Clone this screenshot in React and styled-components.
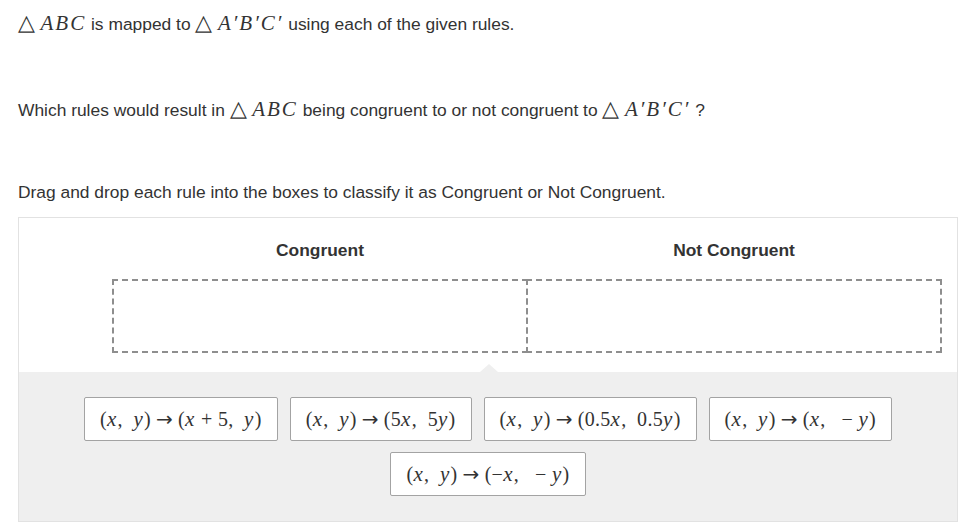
import styled, {createGlobalStyle} from 'styled-components';

const GlobalStyle = createGlobalStyle`
  html, body {
    margin: 0;
    padding: 0;
    background: #fff;
  }
  body {
    font-family: "Liberation Sans", Arial, sans-serif;
    color: #333;
  }
`;

const Page = styled.div`
  width: 972px;
  padding: 12px 14px 0 18px;
  box-sizing: border-box;
`;

const Prompt = styled.p`
  margin: 0;
  font-size: 17.4px;
  line-height: 24px;
  margin-bottom: ${p => p.$gap || 0}px;
`;

const M = styled.span`
  font-family: "Liberation Serif", "Times New Roman", serif;
  font-size: ${p => (p.$up ? 22 : 21)}px;
  line-height: 1;
  font-style: ${p => (p.$up ? 'normal' : 'italic')};
  letter-spacing: ${p => (p.$up ? 0 : 2)}px;
  white-space: pre;
`;

const Panel = styled.div`
  width: 940px;
  border: 1px solid #e2e2e2;
  box-sizing: border-box;
  background: #fff;
`;

const Zones = styled.div`
  display: grid;
  grid-template-columns: 416px 414px;
  padding: 16px 17px 19px 93px;
`;

const Column = styled.div`
  display: flex;
  flex-direction: column;
  align-items: stretch;
  margin-left: ${p => (p.$overlap ? '-2px' : '0')};
`;

const Heading = styled.div`
  font-weight: bold;
  font-size: 17.4px;
  text-align: center;
  height: 32px;
  line-height: 32px;
  margin-bottom: 13px;
`;

const Drop = styled.div`
  height: 74px;
  border: 2px dashed #8e8e8e;
  box-sizing: border-box;
`;

const Tray = styled.div`
  position: relative;
  background: #efefef;
  display: flex;
  flex-wrap: wrap;
  justify-content: center;
  gap: 11px 12px;
  padding: 25px 40px 25px;

  &::before {
    content: '';
    position: absolute;
    left: 461px;
    top: -8px;
    border-left: 9px solid transparent;
    border-right: 9px solid transparent;
    border-bottom: 8px solid #efefef;
  }
`;

const Tile = styled.div`
  height: 44px;
  box-sizing: border-box;
  padding: 0 15px;
  display: flex;
  align-items: center;
  background: #fff;
  border: 1px solid #a3a3a3;
  border-radius: 2px;
  font-family: "Liberation Serif", "Times New Roman", serif;
  font-size: 20px;
  letter-spacing: 0.3px;
  white-space: pre;
`;

const Var = styled.i`
  font-style: italic;
  font-size: 21px;
  padding-right: 1px;
`;

const Arrow = styled.span`
  font-family: "DejaVu Sans", sans-serif;
  font-size: 20px;
  margin: 0 5px;
`;

const rules = [
  ['(', 'x', ',  ', 'y', ')', '→', '(', 'x', ' + 5,  ', 'y', ')'],
  ['(', 'x', ',  ', 'y', ')', '→', '(5', 'x', ',  5', 'y', ')'],
  ['(', 'x', ',  ', 'y', ')', '→', '(0.5', 'x', ',  0.5', 'y', ')'],
  ['(', 'x', ',  ', 'y', ')', '→', '(', 'x', ',   − ', 'y', ')'],
  ['(', 'x', ',  ', 'y', ')', '→', '(−', 'x', ',   − ', 'y', ')'],
];

const Rule = ({parts}) => (
  <Tile>
    {parts.map((t, i) => {
      if (t === 'x' || t === 'y') return <Var key={i}>{t}</Var>;
      if (t === '→') return <Arrow key={i}>{t}</Arrow>;
      return <span key={i}>{t}</span>;
    })}
  </Tile>
);

export default function App() {
  return (
    <Page>
      <GlobalStyle />
      <Prompt $gap={62}>
        <M $up>△ </M><M>ABC</M> is mapped to <M $up>△ </M><M>A′B′C′</M>  using each of the given rules.
      </Prompt>
      <Prompt $gap={58}>
        Which rules would result in <M $up>△ </M><M>ABC</M> being congruent to or not congruent to <M $up>△ </M><M>A′B′C′</M>  ?
      </Prompt>
      <Prompt $gap={13}>
        Drag and drop each rule into the boxes to classify it as Congruent or Not Congruent.
      </Prompt>
      <Panel>
        <Zones>
          <Column>
            <Heading>Congruent</Heading>
            <Drop />
          </Column>
          <Column $overlap>
            <Heading>Not Congruent</Heading>
            <Drop />
          </Column>
        </Zones>
        <Tray>
          {rules.map((parts, i) => (
            <Rule key={i} parts={parts} />
          ))}
        </Tray>
      </Panel>
    </Page>
  );
}
